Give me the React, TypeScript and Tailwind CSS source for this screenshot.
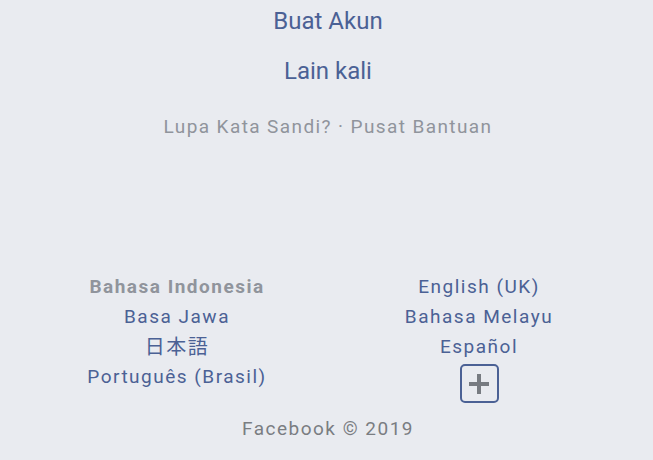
import React from 'react';

const leftLangs = ['Basa Jawa', '日本語', 'Português (Brasil)'];
const rightLangs = ['English (UK)', 'Bahasa Melayu', 'Español'];

const font = { fontFamily: 'Roboto, "Noto Sans CJK JP", sans-serif' };

const App: React.FC = () => {
  return (
    <div
      className="min-h-[460px] w-full bg-[#e9ebf0] pl-[3px] flex flex-col items-center"
      style={font}
    >
      <a className="text-[24px] leading-[42px] text-[#4b6195]">Buat Akun</a>
      <a className="mt-2 text-[24px] leading-[42px] text-[#4b6195]">Lain kali</a>
      <div className="mt-[23px] text-[19px] leading-[24px] tracking-[1.4px] text-[#90949c]">
        Lupa Kata Sandi? · Pusat Bantuan
      </div>

      <div className="mt-[133px] grid w-[604px] grid-cols-2 text-[19px] leading-[30px] tracking-[1.5px] text-[#4b6195]">
        <div className="flex flex-col items-center">
          <span className="font-bold text-[#90949c]">Bahasa Indonesia</span>
          {leftLangs.map((l) => (
            <a key={l} className={l === '日本語' ? 'text-[20px]' : ''}>
              {l}
            </a>
          ))}
        </div>
        <div className="flex flex-col items-center">
          {rightLangs.map((l) => (
            <a key={l}>{l}</a>
          ))}
          <button className="mt-[2px] flex h-[39px] w-[39px] items-center justify-center rounded-[5px] border-2 border-[#4b6195]">
            <svg width="22" height="22" viewBox="0 0 22 22" className="blur-[0.7px]">
              <path d="M11 1v20M1 11h20" stroke="#777b81" strokeWidth="4" />
            </svg>
          </button>
        </div>
      </div>

      <div className="mt-[11px] text-[19px] leading-[30px] tracking-[1.5px] text-[#7a7d82]">
        Facebook © 2019
      </div>
    </div>
  );
};

export default App;
